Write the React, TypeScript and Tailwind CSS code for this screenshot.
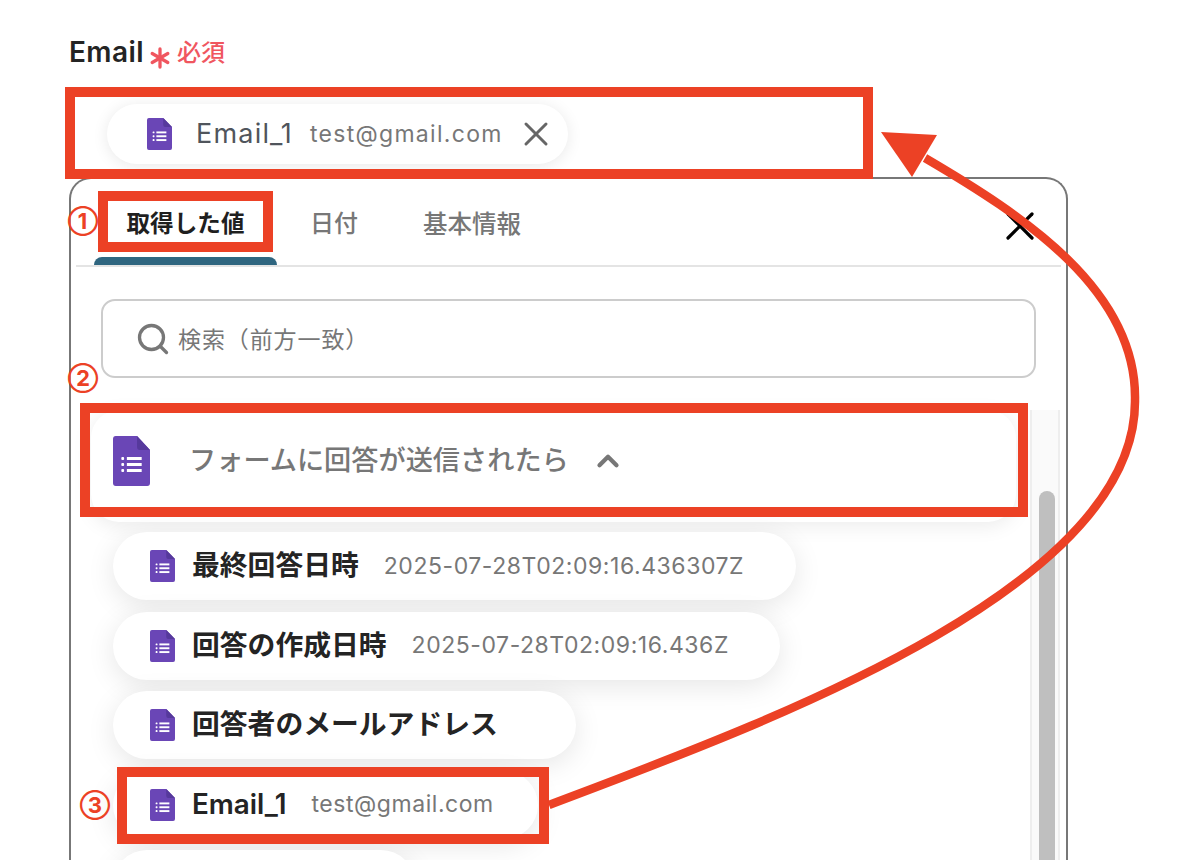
import * as React from "react";
import { Asterisk, ChevronUp, Search, X } from "lucide-react";

function FormsIcon({ className }: { className: string }) {
    return (
        <svg viewBox="0 0 40 50" preserveAspectRatio="none" className={className}>
            <path d="M3 0H26L40 14V47a3 3 0 0 1-3 3H3a3 3 0 0 1-3-3V3a3 3 0 0 1 3-3Z" fill="#6a46b6" />
            <path d="M26 0L40 14H29a3 3 0 0 1-3-3Z" fill="#56399c" />
            <g fill="#fff">
                <rect x="9" y="21" width="3" height="3" rx="1" />
                <rect x="9" y="27" width="3" height="3" rx="1" />
                <rect x="9" y="33" width="3" height="3" rx="1" />
                <rect x="15" y="21" width="16" height="3" />
                <rect x="15" y="27" width="16" height="3" />
                <rect x="15" y="33" width="16" height="3" />
            </g>
        </svg>
    );
}

const rows = [
    { name: "最終回答日時", value: "2025-07-28T02:09:16.436307Z", width: "w-[683px]" },
    { name: "回答の作成日時", value: "2025-07-28T02:09:16.436Z", width: "w-[667px]" },
    { name: "回答者のメールアドレス", value: "", width: "w-[463px]" },
    { name: "Email_1", value: "test@gmail.com", width: "w-[425px]" },
    { name: "", value: "", width: "w-[302px]" },
];

function Box({ className }: { className: string }) {
    return <div className={`absolute border-[10px] border-[#ec4125] ${className}`} />;
}

function Mark({ className, children }: { className: string; children: React.ReactNode }) {
    return (
        <div className={`absolute w-[30px] h-[30px] flex items-center justify-center text-[22px] leading-none font-bold text-[#ec4125] ${className}`}>
            {children}
        </div>
    );
}

export default function App() {
    return (
        <div className="relative w-[1187px] h-[860px] overflow-hidden bg-white pt-[34px] pl-[69px] font-[Inter,'Noto_Sans_CJK_JP',sans-serif]">
            {/* Field label */}
            <div className="flex items-center h-[36px]">
                <span className="text-[28px] font-semibold tracking-[0.4px] text-[#242424]">Email</span>
                <Asterisk className="w-[36px] h-[36px] -ml-[2px] mt-[12px] shrink-0 text-[#f0565f]" strokeWidth={2.2} />
                <span className="-ml-[1px] mt-[1px] text-[24px] font-medium text-[#f0565f]">必須</span>
            </div>

            {/* Selected value */}
            <div className="mt-[34px] ml-[38px] w-[461px] h-[60px] rounded-full bg-white shadow-[0_2px_16px_rgba(0,0,0,0.09)] flex items-center pl-[40px]">
                <FormsIcon className="w-[25px] h-[32px] shrink-0" />
                <span className="ml-[24px] text-[27px] tracking-[1.2px] text-[#50555c]">Email_1</span>
                <span className="ml-[17px] text-[23px] tracking-[1.3px] text-[#777]">test@gmail.com</span>
                <X className="ml-[13px] w-[40px] h-[40px] shrink-0 text-[#666]" strokeWidth={1.8} />
            </div>

            {/* Picker panel */}
            <div className="mt-[13px] w-[999px] h-[700px] border-2 border-b-0 border-[#777] rounded-t-[22px] bg-white">
                <div className="flex mx-[5px] h-[88px] border-b-2 border-[#e4e4e4]">
                    <div className="ml-[18px] w-[183px] flex flex-col items-center">
                        <span className="mt-[29px] h-[32px] leading-[32px] text-[23.6px] font-bold text-[#1f1f1f]">取得した値</span>
                        <div className="mt-auto w-full h-[8px] rounded-t-[8px] bg-[#2f6680]" />
                    </div>
                    <span className="ml-[33px] mt-[29px] h-[32px] leading-[32px] text-[24px] font-medium text-[#777]">日付</span>
                    <span className="ml-[65px] mt-[29px] h-[32px] leading-[32px] text-[24.5px] font-medium text-[#777]">基本情報</span>
                    <X className="ml-auto mr-[17px] mt-[23px] w-[48px] h-[48px] shrink-0 text-black" strokeWidth={1.6} />
                </div>

                <div className="mt-[32px] ml-[30px] w-[935px] h-[79px] border-2 border-[#ccc] rounded-[14px] flex items-center pl-[32px]">
                    <Search className="mt-[1px] w-[36px] h-[36px] text-[#777]" strokeWidth={2.2} />
                    <span className="ml-[7px] mt-[3px] text-[23px] tracking-[0.9px] text-[#777]">検索（前方一致）</span>
                </div>

                <div className="mt-[32px] flex h-[500px]">
                    <div className="w-[959px]">
                        <div className="ml-[20px] w-[925px] h-[112px] pb-[10px] rounded-[28px] bg-white shadow-[0_4px_20px_rgba(0,0,0,0.08)] flex items-center pl-[22px]">
                            <FormsIcon className="w-[37px] h-[50px] shrink-0" />
                            <span className="ml-[39px] text-[27.2px] font-medium text-[#777]">フォームに回答が送信されたら</span>
                            <ChevronUp className="ml-[22px] w-[34px] h-[34px] shrink-0 text-[#777]" strokeWidth={3} />
                        </div>
                        <div className="mt-[10px] ml-[42px] flex flex-col items-start gap-[11.5px]">
                            {rows.map((row, i) => (
                                <div key={i} className={`${row.width} h-[68px] shrink-0 rounded-full bg-white shadow-[0_6px_28px_rgba(0,0,0,0.1)] flex items-center pl-[37px]`}>
                                    {row.name && <FormsIcon className="w-[25px] h-[32px] shrink-0" />}
                                    <span className="ml-[17px] text-[27.8px] font-semibold text-[#242424]">{row.name}</span>
                                    {row.value && <span className="ml-[25px] text-[23px] tracking-[0.55px] text-[#777]">{row.value}</span>}
                                </div>
                            ))}
                        </div>
                    </div>
                    <div className="w-[30px] h-full bg-[#fafafa] border-x-2 border-[#eee] pt-[81px] pl-[7px]">
                        <div className="w-[16px] h-[400px] rounded-t-full bg-[#bfbfbf]" />
                    </div>
                </div>
            </div>

            {/* Annotations */}
            <Box className="left-[65px] top-[87px] w-[808px] h-[92px]" />
            <Box className="left-[98px] top-[191px] w-[175px] h-[61px]" />
            <Box className="left-[80px] top-[403px] w-[948px] h-[114px]" />
            <Box className="left-[117px] top-[767px] w-[432px] h-[77px]" />
            <Mark className="left-[68px] top-[206px]">①</Mark>
            <Mark className="left-[68px] top-[363px]">②</Mark>
            <Mark className="left-[80px] top-[790px]">③</Mark>
            <svg className="absolute left-0 top-0 pointer-events-none" width="1187" height="860" fill="none">
                <path d="M549 805C760 725 1137 590 1135 400C1137 290 1024 216 925 158" stroke="#ec4125" strokeWidth="8.5" />
                <path d="M881 132L937 135L912 177Z" fill="#ec4125" />
            </svg>
        </div>
    );
}
